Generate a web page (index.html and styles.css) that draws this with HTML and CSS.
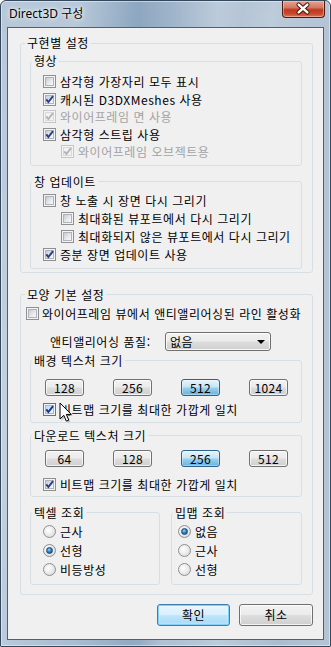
FILE: index.html
```html
<!DOCTYPE html>
<html lang="ko">
<head>
<meta charset="utf-8">
<title>Direct3D 구성</title>
<link rel="stylesheet" href="styles.css">
</head>
<body>
<div class="window">
  <div class="titlebar">
    <span class="title">Direct3D 구성</span>
    <span class="close"><svg width="43" height="17" viewBox="0 0 43 17"><path d="M17 4.5 L26 12.5 M26 4.5 L17 12.5" stroke="#4a1309" stroke-width="4.4" stroke-linecap="round"/><path d="M17 4.5 L26 12.5 M26 4.5 L17 12.5" stroke="#fff" stroke-width="2.4" stroke-linecap="round"/></svg></span>
  </div>
  <div class="client">
    <fieldset class="group">
      <legend>구현별 설정</legend>
      <fieldset class="group sub geo">
        <legend>형상</legend>
        <label class="row"><span class="cb"></span>삼각형 가장자리 모두 표시</label>
        <label class="row"><span class="cb"><svg viewBox="0 0 13 13"><path d="M3.3 6.3 L5.4 9 L10 3.2" fill="none" stroke="#25408f" stroke-width="2"/></svg></span>캐시된 D3DXMeshes 사용</label>
        <label class="row dis"><span class="cb"><svg viewBox="0 0 13 13"><path d="M3.3 6.3 L5.4 9 L10 3.2" fill="none" stroke="#b4b4b4" stroke-width="2"/></svg></span>와이어프레임 면 사용</label>
        <label class="row"><span class="cb"><svg viewBox="0 0 13 13"><path d="M3.3 6.3 L5.4 9 L10 3.2" fill="none" stroke="#25408f" stroke-width="2"/></svg></span>삼각형 스트립 사용</label>
        <label class="row dis indent"><span class="cb"><svg viewBox="0 0 13 13"><path d="M3.3 6.3 L5.4 9 L10 3.2" fill="none" stroke="#b4b4b4" stroke-width="2"/></svg></span>와이어프레임 오브젝트용</label>
      </fieldset>
      <fieldset class="group sub upd">
        <legend>창 업데이트</legend>
        <label class="row"><span class="cb"></span>창 노출 시 장면 다시 그리기</label>
        <label class="row indent"><span class="cb"></span>최대화된 뷰포트에서 다시 그리기</label>
        <label class="row indent"><span class="cb"></span>최대화되지 않은 뷰포트에서 다시 그리기</label>
        <label class="row"><span class="cb"><svg viewBox="0 0 13 13"><path d="M3.3 6.3 L5.4 9 L10 3.2" fill="none" stroke="#25408f" stroke-width="2"/></svg></span>증분 장면 업데이트 사용</label>
      </fieldset>
    </fieldset>

    <fieldset class="group look">
      <legend>모양 기본 설정</legend>
      <label class="row aa"><span class="cb"></span>와이어프레임 뷰에서 앤티앨리어싱된 라인 활성화</label>
      <div class="quality">
        <span class="qlabel">앤티앨리어싱 품질:</span>
        <div class="select"><span>없음</span><i class="arrow"></i></div>
      </div>
      <fieldset class="group sub bg">
        <legend>배경 텍스처 크기</legend>
        <div class="sizes">
          <button class="btn">128</button>
          <button class="btn">256</button>
          <button class="btn sel">512</button>
          <button class="btn">1024</button>
        </div>
        <label class="row match"><span class="cb hot"><svg viewBox="0 0 13 13"><path d="M3.3 6.3 L5.4 9 L10 3.2" fill="none" stroke="#1d3487" stroke-width="2"/></svg></span>비트맵 크기를 최대한 가깝게 일치
          <svg class="cursor" width="14" height="22" viewBox="0 0 14 22"><path d="M1.5 1.5 L1.5 17.5 L5.3 13.8 L7.8 19.6 L10.3 18.6 L7.8 12.9 L12.8 12.9 Z" fill="#6a6a6a" opacity=".35" transform="translate(1 1.2)"/><path d="M1 1 L1 17 L4.8 13.3 L7.3 19.1 L9.8 18.1 L7.3 12.4 L12.3 12.4 Z" fill="#fff" stroke="#000" stroke-width="1" stroke-linejoin="miter"/></svg>
        </label>
      </fieldset>
      <fieldset class="group sub dl">
        <legend>다운로드 텍스처 크기</legend>
        <div class="sizes">
          <button class="btn">64</button>
          <button class="btn">128</button>
          <button class="btn sel">256</button>
          <button class="btn">512</button>
        </div>
        <label class="row match"><span class="cb"><svg viewBox="0 0 13 13"><path d="M3.3 6.3 L5.4 9 L10 3.2" fill="none" stroke="#25408f" stroke-width="2"/></svg></span>비트맵 크기를 최대한 가깝게 일치</label>
      </fieldset>
      <div class="lookups">
        <fieldset class="group texel">
          <legend>텍셀 조회</legend>
          <label class="rrow"><span class="rd"></span>근사</label>
          <label class="rrow"><span class="rd on"></span>선형</label>
          <label class="rrow"><span class="rd"></span>비등방성</label>
        </fieldset>
        <fieldset class="group mip">
          <legend>밉맵 조회</legend>
          <label class="rrow"><span class="rd on"></span>없음</label>
          <label class="rrow"><span class="rd"></span>근사</label>
          <label class="rrow"><span class="rd"></span>선형</label>
        </fieldset>
      </div>
    </fieldset>

    <div class="actions">
      <button class="btn big default">확인</button>
      <button class="btn big">취소</button>
    </div>
  </div>
</div>
</body>
</html>
```

FILE: styles.css
```css
html, body {
  margin: 0;
  padding: 0;
  background: #ffffff;
}

body {
  font-family: "Noto Sans CJK KR", "Noto Sans", sans-serif;
  font-size: 12px;
  letter-spacing: 0.55px;
  color: #000;
}

.window {
  box-sizing: border-box;
  width: 331px;
  height: 647px;
  border: 1px solid #34475b;
  border-radius: 6px 6px 1px 1px;
  background:
    linear-gradient(100deg, rgba(255,255,255,0) 0%, rgba(255,255,255,.18) 18%, rgba(255,255,255,0) 30%, rgba(255,255,255,0) 55%, rgba(255,255,255,.22) 62%, rgba(255,255,255,0) 75%),
    linear-gradient(90deg, #b7c8d9 0%, #a9bdd1 22%, #8ea7c0 42%, #9fb4ca 52%, #bccbda 66%, #aabdcf 84%, #b4c4d4 100%);
  box-shadow: inset 0 0 0 1px rgba(255,255,255,.45);
  overflow: hidden;
}

.titlebar {
  height: 26px;
  display: flex;
  align-items: flex-start;
  padding: 0 5px 0 8px;
}

.title {
  font-family: "Noto Sans", "Noto Sans CJK KR", sans-serif;
  font-size: 12px;
  letter-spacing: 0;
  line-height: 26px;
  color: #000;
  text-shadow: 0 0 6px rgba(255,255,255,.95), 0 0 3px rgba(255,255,255,.9);
}

.close {
  margin-left: auto;
  width: 43px;
  height: 17px;
  box-sizing: border-box;
  border: 1px solid #4b1b12;
  border-top: none;
  border-radius: 0 0 4px 4px;
  background: linear-gradient(#e3a394 0%, #d47a64 40%, #c0391e 55%, #c8482c 80%, #d9785e 100%);
  box-shadow: inset 0 0 0 1px rgba(255,220,210,.45);
  display: flex;
}

.close svg {
  margin: -1px 0 0 -1px;
}

.client {
  box-sizing: border-box;
  width: 317px;
  height: 613px;
  margin: 0 6px;
  border: 1px solid #4c6177;
  background: #f0f0f0;
  padding: 7px 10px 0 12px;
}

.group {
  margin: 0;
  padding: 0;
  min-width: 0;
  border: 1px solid #d5dfe5;
  border-radius: 3px;
}

legend {
  padding: 0 2px;
  margin-left: 4px;
  height: 16px;
  line-height: 16px;
  font-size: 12px;
}

.sub legend {
  margin-left: 1px;
}

.sub {
  margin: 2px 10px 0 9px;
}

.geo {
  padding: 4px 0 4px;
}

.geo .row {
  height: 17.5px;
}

.upd {
  margin-top: 8px;
  margin-bottom: 3px;
  padding: 2px 0 4px;
}

.row {
  display: flex;
  align-items: center;
  height: 18px;
  padding-left: 12px;
  white-space: nowrap;
}

.row.indent {
  padding-left: 30px;
}

.row.dis {
  color: #a3a3a3;
}

.cb {
  flex: none;
  position: relative;
  box-sizing: border-box;
  width: 13px;
  height: 13px;
  border: 1px solid #8e8f8f;
  background: #f4f4f4;
  margin-right: 4px;
}

.cb::before {
  content: "";
  position: absolute;
  left: 1px;
  top: 1px;
  width: 7px;
  height: 7px;
  border: 1px solid #aeb3b9;
  background: linear-gradient(135deg, #c6cbd2 0%, #e6e8ea 55%, #fafafa 100%);
}

.cb svg {
  position: absolute;
  left: -1px;
  top: -1px;
  width: 13px;
  height: 13px;
}

.dis .cb {
  border-color: #c6c6c6;
}

.dis .cb::before {
  border-color: #d9d9d9;
  background: #f2f2f2;
}

.cb.hot {
  border-color: #3c7fb1;
}

.cb.hot::before {
  border-color: #79c6f9;
  background: linear-gradient(135deg, #b1dffd 0%, #e9f7fe 100%);
}

.look {
  margin-top: 14px;
}

.look > .row.aa {
  margin-top: 2px;
  padding-left: 5px;
}

.aa .cb {
  margin-right: 3px;
}

.quality {
  display: flex;
  align-items: center;
  height: 19px;
  margin-top: 9px;
  padding-left: 29px;
  gap: 13px;
}

.qlabel {
  width: 102px;
  white-space: nowrap;
}

.select {
  box-sizing: border-box;
  width: 106px;
  height: 19px;
  border: 1px solid #707070;
  border-radius: 3px;
  background: linear-gradient(#f2f2f2 0%, #ebebeb 48%, #dddddd 52%, #cfcfcf 100%);
  box-shadow: inset 0 0 0 1px rgba(255,255,255,.8);
  display: flex;
  align-items: center;
  padding: 0 5px 0 4px;
  line-height: 17px;
}

.arrow {
  margin-left: auto;
  width: 0;
  height: 0;
  border-left: 4px solid transparent;
  border-right: 4px solid transparent;
  border-top: 4px solid #000;
  margin-top: 1px;
}

.bg {
  margin-top: 2px;
  padding-bottom: 3px;
}

.bg .sizes {
  margin-top: 10px;
}

.bg .row.match {
  margin-top: 5px;
  position: relative;
}

.dl {
  margin-top: 5px;
  padding-bottom: 2px;
}

.dl .sizes {
  margin-top: 6px;
}

.dl .row.match {
  margin-top: 9px;
}

.sizes {
  display: flex;
  gap: 29px;
  padding-left: 14px;
}

.btn {
  box-sizing: border-box;
  width: 39px;
  height: 17px;
  padding: 0;
  margin: 0;
  font-family: "Noto Sans CJK KR", "Noto Sans", sans-serif;
  font-size: 12px;
  letter-spacing: 0.3px;
  line-height: 15px;
  color: #000;
  border: 1px solid #707070;
  border-radius: 3px;
  background: linear-gradient(#f2f2f2 0%, #ebebeb 48%, #dddddd 52%, #cfcfcf 100%);
  box-shadow: inset 0 0 0 1px rgba(255,255,255,.75);
}

.btn.sel {
  border-color: #2c628b;
  background: linear-gradient(#e5f4fc 0%, #c4e5f6 48%, #98d1ef 52%, #68b3db 100%);
  box-shadow: inset 0 0 0 1px rgba(255,255,255,.35);
}

.cursor {
  position: absolute;
  left: 28px;
  top: 1px;
}

.lookups {
  display: flex;
  gap: 11px;
  margin: 8px 10px 9px 9px;
}

.texel {
  width: 130px;
  box-sizing: border-box;
  padding: 1.5px 0 5px;
}

.mip {
  width: 131px;
  box-sizing: border-box;
  padding: 1.5px 0 5px;
}

.texel legend, .mip legend {
  margin-left: 1px;
}

.rrow {
  display: flex;
  align-items: center;
  height: 19px;
  padding-left: 12px;
  white-space: nowrap;
}

.mip .rrow {
  padding-left: 6px;
}

.rd {
  flex: none;
  position: relative;
  box-sizing: border-box;
  width: 13px;
  height: 13px;
  border-radius: 50%;
  border: 1px solid #8e8f8f;
  background: radial-gradient(circle at 40% 40%, #ffffff 0%, #f1f1f1 35%, #cfd2d6 100%);
  margin-right: 4px;
}

.rd.on::after {
  content: "";
  position: absolute;
  left: 2px;
  top: 2px;
  width: 7px;
  height: 7px;
  box-sizing: border-box;
  border-radius: 50%;
  border: 1px solid #174a77;
  background: radial-gradient(circle at 40% 35%, #9ad9fa 0%, #2f86c4 45%, #0f3f6f 100%);
}

.actions {
  display: flex;
  justify-content: flex-end;
  gap: 9px;
  margin-top: 9px;
}

.btn.big {
  width: 73px;
  height: 22px;
  line-height: 20px;
  letter-spacing: 0.55px;
}

.btn.big + .btn.big {
  width: 74px;
}

.btn.default {
  border-color: #3c7fb1;
  background: linear-gradient(#eaf6fd 0%, #d9f0fc 48%, #bee6fd 52%, #a7d9f5 100%);
  box-shadow: inset 0 0 0 1px #7ed0f6, inset 0 0 2px 1px rgba(255,255,255,.6);
}
```
